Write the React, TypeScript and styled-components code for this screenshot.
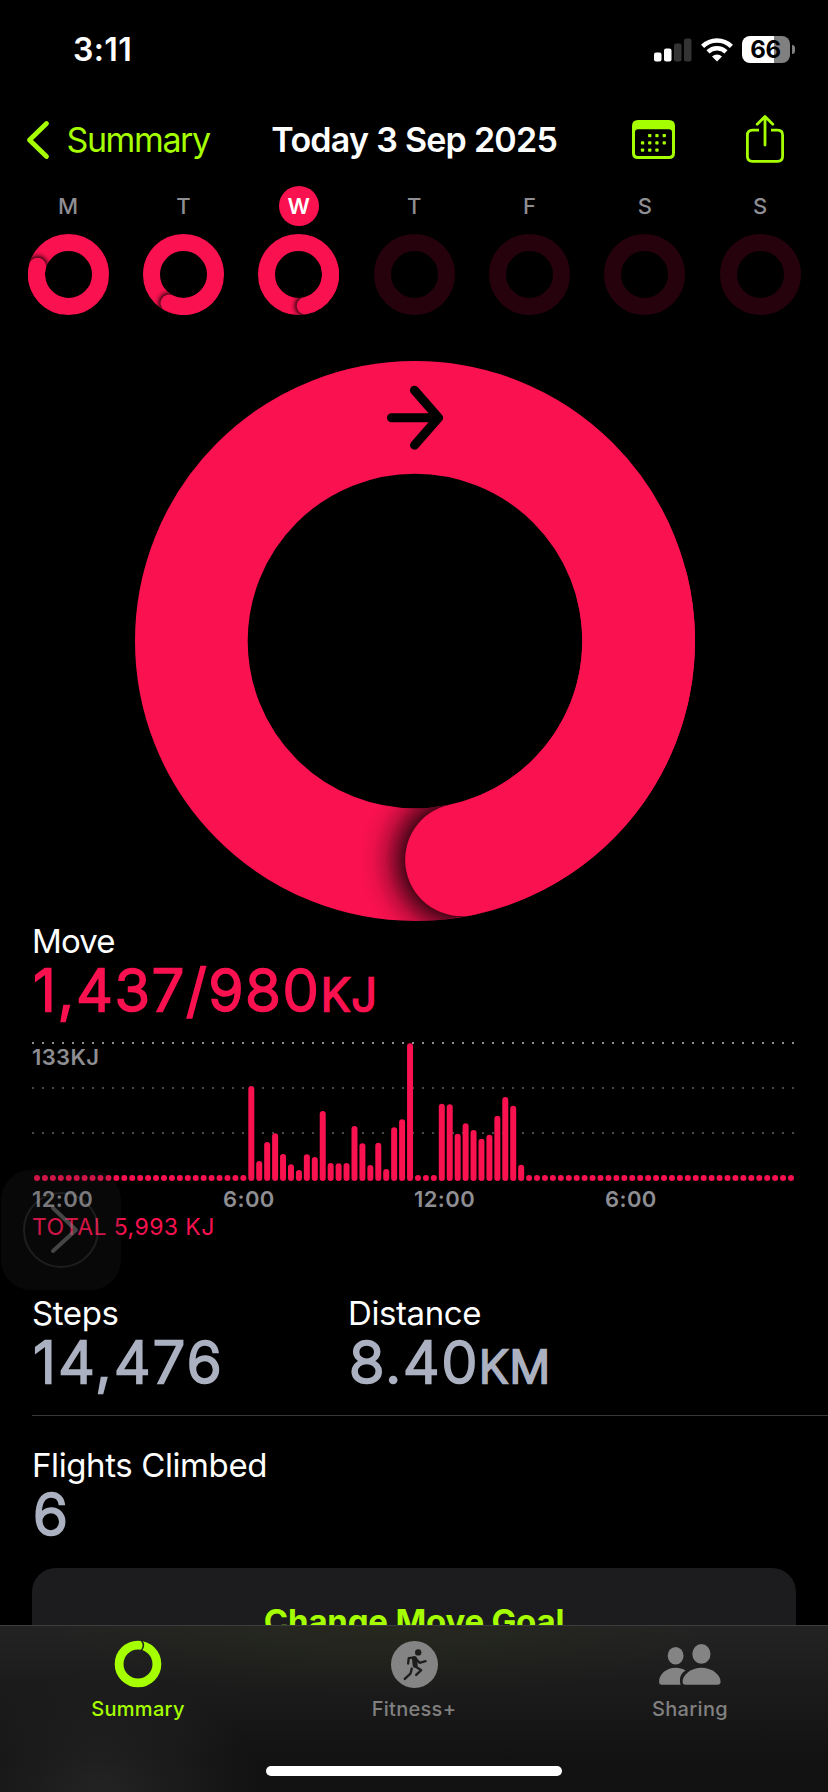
import React from 'react';
import styled, { createGlobalStyle } from 'styled-components';

const PINK = '#fa114f';
const LIME = '#a6ff00';

const Global = createGlobalStyle`
  *, *::before, *::after { box-sizing: border-box; }
  body {
    margin: 0;
    background: #000;
    color: #fff;
    font-family: Inter, "Liberation Sans", sans-serif;
  }
`;

const Screen = styled.div`
  position: relative;
  display: flex;
  flex-direction: column;
  width: 828px;
  height: 1792px;
  overflow: hidden;
  background: #000;
`;

const StatusBar = styled.header`
  display: flex;
  align-items: center;
  justify-content: space-between;
  flex: none;
  height: 99px;
  padding: 0 33.5px 0 73px;
`;

const Clock = styled.time`
  font-size: 32px;
  font-weight: 600;
  letter-spacing: 0.4px;
`;

const StatusIcons = styled.div`
  display: flex;
  align-items: center;
  gap: 9px;
`;

const Battery = styled.div`
  display: flex;
  align-items: center;
  gap: 2px;
`;

const BatteryBody = styled.div<{ $level: number }>`
  width: 48px;
  height: 27px;
  border-radius: 8px;
  background: linear-gradient(to right, #fff ${(p) => p.$level}%, #808080 ${(p) => p.$level}%);
  color: #000;
  font-size: 24px;
  font-weight: 700;
  line-height: 27px;
  text-align: center;
  letter-spacing: -0.3px;
`;

const BatteryNub = styled.div`
  width: 3px;
  height: 9px;
  border-radius: 0 4px 4px 0;
  background: #808080;
`;

const NavBar = styled.nav`
  display: grid;
  grid-template-columns: 1fr auto 1fr;
  align-items: center;
  flex: none;
  height: 83px;
  padding: 0 44.5px 2px 26px;
`;

const BackLink = styled.div`
  display: flex;
  align-items: center;
  gap: 16.5px;
  color: ${LIME};
  font-size: 34px;
  letter-spacing: -1.4px;
`;

const Title = styled.h1`
  margin: 0;
  padding-left: 19px;
  font-size: 34px;
  font-weight: 600;
  letter-spacing: -0.74px;
  white-space: nowrap;
`;

const NavActions = styled.div`
  display: flex;
  align-items: center;
  justify-content: flex-end;
  gap: 71px;
`;

const Week = styled.section`
  display: grid;
  grid-template-columns: repeat(7, 115.33px);
  justify-items: center;
  flex: none;
  padding: 4px 0 0 10.5px;
`;

const Day = styled.div`
  display: flex;
  flex-direction: column;
  align-items: center;
  gap: 7.5px;
`;

const DayLabel = styled.span<{ $today?: boolean }>`
  width: 40px;
  height: 40px;
  border-radius: 50%;
  background: ${(p) => (p.$today ? PINK : 'transparent')};
  color: ${(p) => (p.$today ? '#fff' : '#8e8e93')};
  font-size: 22px;
  font-weight: ${(p) => (p.$today ? 600 : 500)};
  line-height: 40px;
  text-align: center;
`;

const Content = styled.main`
  display: flex;
  flex-direction: column;
  flex: 1;
  min-height: 0;
  overflow: hidden;
`;

const HeroRing = styled.div`
  display: flex;
  justify-content: center;
  flex: none;
  height: 560px;
  margin-top: 46.5px;
  padding-left: 1px;
`;

const Panel = styled.section`
  display: flex;
  flex-direction: column;
  flex: none;
  padding: 0 32px;
`;

const MetricLabel = styled.h2<{ $spacing?: number }>`
  margin: 0;
  font-size: 33px;
  font-weight: 400;
  line-height: 40px;
  letter-spacing: ${(p) => p.$spacing ?? -0.4}px;
  white-space: nowrap;
`;

const MetricValue = styled.div<{ $color: string; $spacing?: number }>`
  height: 58px;
  padding-left: 1px;
  color: ${(p) => p.$color};
  font-size: 58px;
  font-weight: 300;
  line-height: 58px;
  letter-spacing: ${(p) => p.$spacing ?? 2}px;
  white-space: nowrap;
  -webkit-text-stroke: 2.5px ${(p) => p.$color};
  stroke-linejoin: round;
`;

const Unit = styled.span`
  font-size: 45px;
  letter-spacing: 1.4px;
`;

const Chart = styled.figure`
  position: relative;
  height: 140px;
  margin: 23px 0 0;
`;

const Peak = styled.figcaption`
  position: absolute;
  top: 2px;
  left: 0;
  color: #8e8e93;
  font-size: 22px;
  font-weight: 600;
  line-height: 26px;
  letter-spacing: 0.4px;
`;

const Axis = styled.div`
  display: grid;
  grid-template-columns: repeat(4, 191px);
  margin-top: 5px;
  color: #8e8e93;
  font-size: 22px;
  font-weight: 600;
  line-height: 24px;
  letter-spacing: 0.4px;
`;

const Total = styled.div`
  margin-top: 1px;
  color: ${PINK};
  font-size: 23px;
  line-height: 30px;
  letter-spacing: 0.42px;
`;

const Stats = styled.section<{ $divided?: boolean }>`
  display: grid;
  grid-template-columns: 316px 1fr;
  flex: none;
  height: 123px;
  margin: ${(p) => (p.$divided ? '51px' : '29px')} 0 0 32px;
  border-bottom: ${(p) => (p.$divided ? '1px solid #38383a' : 'none')};
`;

const Stat = styled.div``;

const GoalCard = styled.button`
  display: block;
  flex: none;
  height: 110px;
  margin: 0 32px;
  padding: 33px 0 0;
  border: 0;
  border-radius: 24px;
  background: #1c1c1e;
  color: ${LIME};
  font: 700 33px/40px Inter, "Liberation Sans", sans-serif;
  letter-spacing: -0.2px;
  text-align: center;
`;

const CardText = styled.span`
  display: block;
  height: 77px;
`;

const TabBar = styled.footer`
  position: relative;
  display: flex;
  flex-direction: column;
  justify-content: space-between;
  flex: none;
  height: 167px;
  border-top: 1px solid #3d3d3d;
  background:
    radial-gradient(ellipse 160px 110px at 100px 160px, rgba(60, 60, 60, 0.4), rgba(60, 60, 60, 0)),
    radial-gradient(ellipse 330px 70px at 380px 0, rgba(50, 60, 20, 0.25), rgba(50, 60, 20, 0)),
    linear-gradient(#232323, #121212 80%);
`;

const Tabs = styled.div`
  display: grid;
  grid-template-columns: repeat(3, 276px);
  padding-top: 14px;
`;

const Tab = styled.div<{ $active?: boolean }>`
  display: flex;
  flex-direction: column;
  align-items: center;
  gap: 8px;
  color: ${(p) => (p.$active ? LIME : '#808080')};
  font-size: 20px;
  font-weight: 500;
  line-height: 26px;
  letter-spacing: 0.3px;
`;

const TabIcon = styled.div`
  display: flex;
  align-items: center;
  justify-content: center;
  height: 48px;
`;

const HomeIndicator = styled.div`
  width: 296px;
  height: 10px;
  margin: 0 auto 16px;
  border-radius: 5px;
  background: #fff;
`;

const FloatingControl = styled.div`
  position: absolute;
  top: 1170px;
  left: 1px;
  width: 120px;
  height: 120px;
  border-radius: 30px;
  background: rgba(38, 38, 38, 0.2);
`;

interface RingProps {
  size: number;
  width: number;
  /** Angle reached on the second lap, in degrees clockwise from the top. */
  angle?: number;
  id: string;
  children?: React.ReactNode;
}

function Ring({ size, width, angle, id, children }: RingProps) {
  const c = size / 2;
  const r = c - width / 2;
  if (angle === undefined) {
    return (
      <svg width={size} height={size}>
        <circle cx={c} cy={c} r={r} fill="none" stroke="#26020c" strokeWidth={width} />
      </svg>
    );
  }
  const rad = (angle * Math.PI) / 180;
  const x = c + r * Math.sin(rad);
  const y = c - r * Math.cos(rad);
  const back = rad - 1.6;
  const bx = c + r * Math.sin(back);
  const by = c - r * Math.cos(back);
  const inner = c - width;
  const glow = width * 0.9;
  return (
    <svg width={size} height={size}>
      <defs>
        <clipPath id={`${id}-clip`}>
          <path
            clipRule="evenodd"
            d={`M${c} 0A${c} ${c} 0 1 1 ${c} ${size}A${c} ${c} 0 1 1 ${c} 0ZM${c} ${width}A${inner} ${inner} 0 1 1 ${c} ${size - width}A${inner} ${inner} 0 1 1 ${c} ${width}Z`}
          />
        </clipPath>
        <radialGradient id={`${id}-glow`} gradientUnits="userSpaceOnUse" cx={x} cy={y} r={glow}>
          <stop offset="0.55" stopColor="#000" stopOpacity="0.7" />
          <stop offset="0.63" stopColor="#000" stopOpacity="0.5" />
          <stop offset="0.75" stopColor="#000" stopOpacity="0.22" />
          <stop offset="0.87" stopColor="#000" stopOpacity="0.06" />
          <stop offset="1" stopColor="#000" stopOpacity="0" />
        </radialGradient>
      </defs>
      <circle cx={c} cy={c} r={r} fill="none" stroke={PINK} strokeWidth={width} />
      <circle cx={x} cy={y} r={glow} fill={`url(#${id}-glow)`} clipPath={`url(#${id}-clip)`} />
      <path
        d={`M${bx} ${by}A${r} ${r} 0 0 1 ${x} ${y}`}
        fill="none"
        stroke={PINK}
        strokeWidth={width}
        strokeLinecap="round"
      />
      {children}
    </svg>
  );
}

const week: { label: string; angle?: number; today?: boolean }[] = [
  { label: 'M', angle: 285 },
  { label: 'T', angle: 207 },
  { label: 'W', angle: 168, today: true },
  { label: 'T' },
  { label: 'F' },
  { label: 'S' },
  { label: 'S' },
];

const QUIET = 6;
const quiet = (n: number): number[] => Array(n).fill(QUIET);
const bars: number[] = [
  ...quiet(27),
  95, 20, 39, 47.7, 27, 16.7, 11, 26.7, 24, 70, 18, 17.7, 18, 55, 37.7, 16, 38.3, 12, 53.7, 61.7, 137.7,
  ...quiet(3),
  77.3, 76.7, 47.3, 57.7, 51, 42.3, 46.3, 65.3, 84, 75.3, 16.3,
  ...quiet(34),
];

const Plot = styled.svg`
  display: block;
`;

function EnergyChart() {
  return (
    <Plot width="764" height="140">
      {[1, 46, 91].map((y, i) => (
        <line
          key={y}
          x1="0"
          x2="762"
          y1={y}
          y2={y}
          stroke={i === 0 ? '#8e8e93' : '#48484a'}
          strokeWidth="2"
          strokeDasharray="2 8"
        />
      ))}
      {bars.map((h, i) => (
        <rect key={i} x={2 + i * 7.937} y={139 - h} width="6" height={h} rx="3" fill={PINK} />
      ))}
    </Plot>
  );
}

function SignalIcon() {
  return (
    <svg width="38" height="24">
      <rect x="0" y="14.5" width="7.5" height="9" rx="2" fill="#fff" />
      <rect x="10" y="10.5" width="7.5" height="13" rx="2" fill="#fff" />
      <rect x="20" y="5.5" width="7.5" height="18" rx="2" fill="#333" />
      <rect x="30" y="0.5" width="7.5" height="23" rx="2" fill="#333" />
    </svg>
  );
}

function WifiIcon() {
  return (
    <svg width="32" height="24" viewBox="0 0 32 24">
      <g fill="none" stroke="#fff" strokeWidth="4.4">
        <path d="M1.6 8.4A20.5 20.5 0 0 1 30.4 8.4" />
        <path d="M7 13.8A13 13 0 0 1 25 13.8" />
      </g>
      <path d="M11 18.4A7.4 7.4 0 0 1 21 18.4L16 23.6Z" fill="#fff" />
    </svg>
  );
}

function CalendarIcon() {
  const dots = [
    [17.7, 15.6], [24.9, 15.6], [32.2, 15.6],
    [10.5, 22.8], [17.7, 22.8], [24.9, 22.8], [32.2, 22.8],
    [10.5, 30], [17.7, 30], [24.9, 30],
  ];
  return (
    <svg width="43" height="39" viewBox="0 0 43 39" fill={LIME}>
      <path
        fillRule="evenodd"
        d="M6 0H37Q43 0 43 6V33Q43 39 37 39H6Q0 39 0 33V6Q0 0 6 0ZM6 9.3Q3 9.3 3 12.3V33Q3 36 6 36H37Q40 36 40 33V12.3Q40 9.3 37 9.3Z"
      />
      {dots.map(([x, y]) => (
        <rect key={`${x}-${y}`} x={x - 1.6} y={y - 1.6} width="3.3" height="3.3" rx="0.8" />
      ))}
    </svg>
  );
}

function ShareIcon() {
  return (
    <svg width="38" height="52" viewBox="0 0 38 52" fill="none" stroke={LIME} strokeWidth="2.8" strokeLinecap="round">
      <path d="M13 16.2H6.4Q1.4 16.2 1.4 21.2V42.3Q1.4 47.3 6.4 47.3H31.6Q36.6 47.3 36.6 42.3V21.2Q36.6 16.2 31.6 16.2H25" strokeLinecap="butt" />
      <path d="M19 31V3M11.2 10.2L19 2.4L26.8 10.2" strokeLinejoin="round" />
    </svg>
  );
}

function SummaryTabIcon() {
  return (
    <svg width="48" height="48" viewBox="0 0 48 48" fill="none">
      <circle cx="24" cy="24" r="18.9" stroke={LIME} strokeWidth="8.8" />
      <path d="M27.2 0.2Q31.6 5.2 27.2 10.6" stroke="#20211f" strokeWidth="1.5" />
    </svg>
  );
}

function FitnessTabIcon() {
  return (
    <svg width="47" height="47" viewBox="90 61 140 140" fill="none">
      <circle cx="160" cy="131" r="70" fill="#848484" />
      <circle cx="171" cy="95" r="9.5" fill="#1e1e1d" />
      <g stroke="#1e1e1d" strokeWidth="7" strokeLinecap="round" strokeLinejoin="round">
        <path d="M141 128L143 112L161 110L175 126L193 121" />
        <path d="M160 114L162 133" strokeWidth="15" />
        <path d="M163 137L180 148L165 162" />
        <path d="M152 143L148 158L131 174" />
      </g>
    </svg>
  );
}

function SharingTabIcon() {
  return (
    <svg width="62" height="41" viewBox="897 69 187 124" fill="#848484">
      <ellipse cx="947" cy="104.5" rx="24" ry="26.5" />
      <ellipse cx="1025" cy="99" rx="27.5" ry="30" />
      <path d="M897 183C897 160 920 141 947 141C958 141 968 144 977 149C962 158 957 173 962 192H905Q897 192 897 183Z" />
      <path d="M968 183C968 162 995 141 1025 141C1056 141 1083 162 1083 183Q1083 192 1074 192H977Q968 192 968 183Z" />
    </svg>
  );
}

export default function App() {
  return (
    <Screen>
      <Global />
      <StatusBar>
        <Clock>3:11</Clock>
        <StatusIcons>
          <SignalIcon />
          <WifiIcon />
          <Battery>
            <BatteryBody $level={67}>66</BatteryBody>
            <BatteryNub />
          </Battery>
        </StatusIcons>
      </StatusBar>
      <NavBar>
        <BackLink>
          <svg width="24" height="40" fill="none" stroke={LIME} strokeWidth="4.8" strokeLinecap="round" strokeLinejoin="round">
            <path d="M20.5 3.5L3.5 20L20.5 36.5" />
          </svg>
          Summary
        </BackLink>
        <Title>Today 3 Sep 2025</Title>
        <NavActions>
          <CalendarIcon />
          <ShareIcon />
        </NavActions>
      </NavBar>
      <Content>
        <Week>
          {week.map((d, i) => (
            <Day key={i}>
              <DayLabel $today={d.today}>{d.label}</DayLabel>
              <Ring id={`day${i}`} size={81} width={17} angle={d.angle} />
            </Day>
          ))}
        </Week>
        <HeroRing>
          <Ring id="hero" size={560} width={112.7} angle={168}>
            <path
              d="M256.5 56.7H303M279.5 29.2L303.5 56.7L279.5 84.2"
              fill="none"
              stroke="#000"
              strokeWidth="9"
              strokeLinecap="round"
              strokeLinejoin="round"
            />
          </Ring>
        </HeroRing>
        <Panel>
          <MetricLabel $spacing={-0.9}>Move</MetricLabel>
          <MetricValue $color={PINK}>
            1,437/980<Unit>KJ</Unit>
          </MetricValue>
          <Chart>
            <EnergyChart />
            <Peak>133KJ</Peak>
          </Chart>
          <Axis>
            <span>12:00</span>
            <span>6:00</span>
            <span>12:00</span>
            <span>6:00</span>
          </Axis>
          <Total>TOTAL 5,993 KJ</Total>
        </Panel>
        <Stats $divided>
          <Stat>
            <MetricLabel>Steps</MetricLabel>
            <MetricValue $color="#abb1c0" $spacing={2.4}>14,476</MetricValue>
          </Stat>
          <Stat>
            <MetricLabel>Distance</MetricLabel>
            <MetricValue $color="#abb1c0" $spacing={1.8}>
              8.40<Unit>KM</Unit>
            </MetricValue>
          </Stat>
        </Stats>
        <Stats>
          <Stat>
            <MetricLabel>Flights Climbed</MetricLabel>
            <MetricValue $color="#abb1c0">6</MetricValue>
          </Stat>
        </Stats>
        <GoalCard>
          <CardText>Change Move Goal</CardText>
        </GoalCard>
      </Content>
      <TabBar>
        <Tabs>
          <Tab $active>
            <TabIcon>
              <SummaryTabIcon />
            </TabIcon>
            Summary
          </Tab>
          <Tab>
            <TabIcon>
              <FitnessTabIcon />
            </TabIcon>
            Fitness+
          </Tab>
          <Tab>
            <TabIcon>
              <SharingTabIcon />
            </TabIcon>
            Sharing
          </Tab>
        </Tabs>
        <HomeIndicator />
      </TabBar>
      <FloatingControl>
        <svg width="120" height="120" fill="none">
          <circle cx="60" cy="60" r="37" stroke="rgba(255,255,255,0.09)" strokeWidth="2" />
          <path d="M52 38L75 60L52 81" stroke="rgba(130,130,130,0.5)" strokeWidth="4" strokeLinecap="round" strokeLinejoin="round" />
        </svg>
      </FloatingControl>
    </Screen>
  );
}
